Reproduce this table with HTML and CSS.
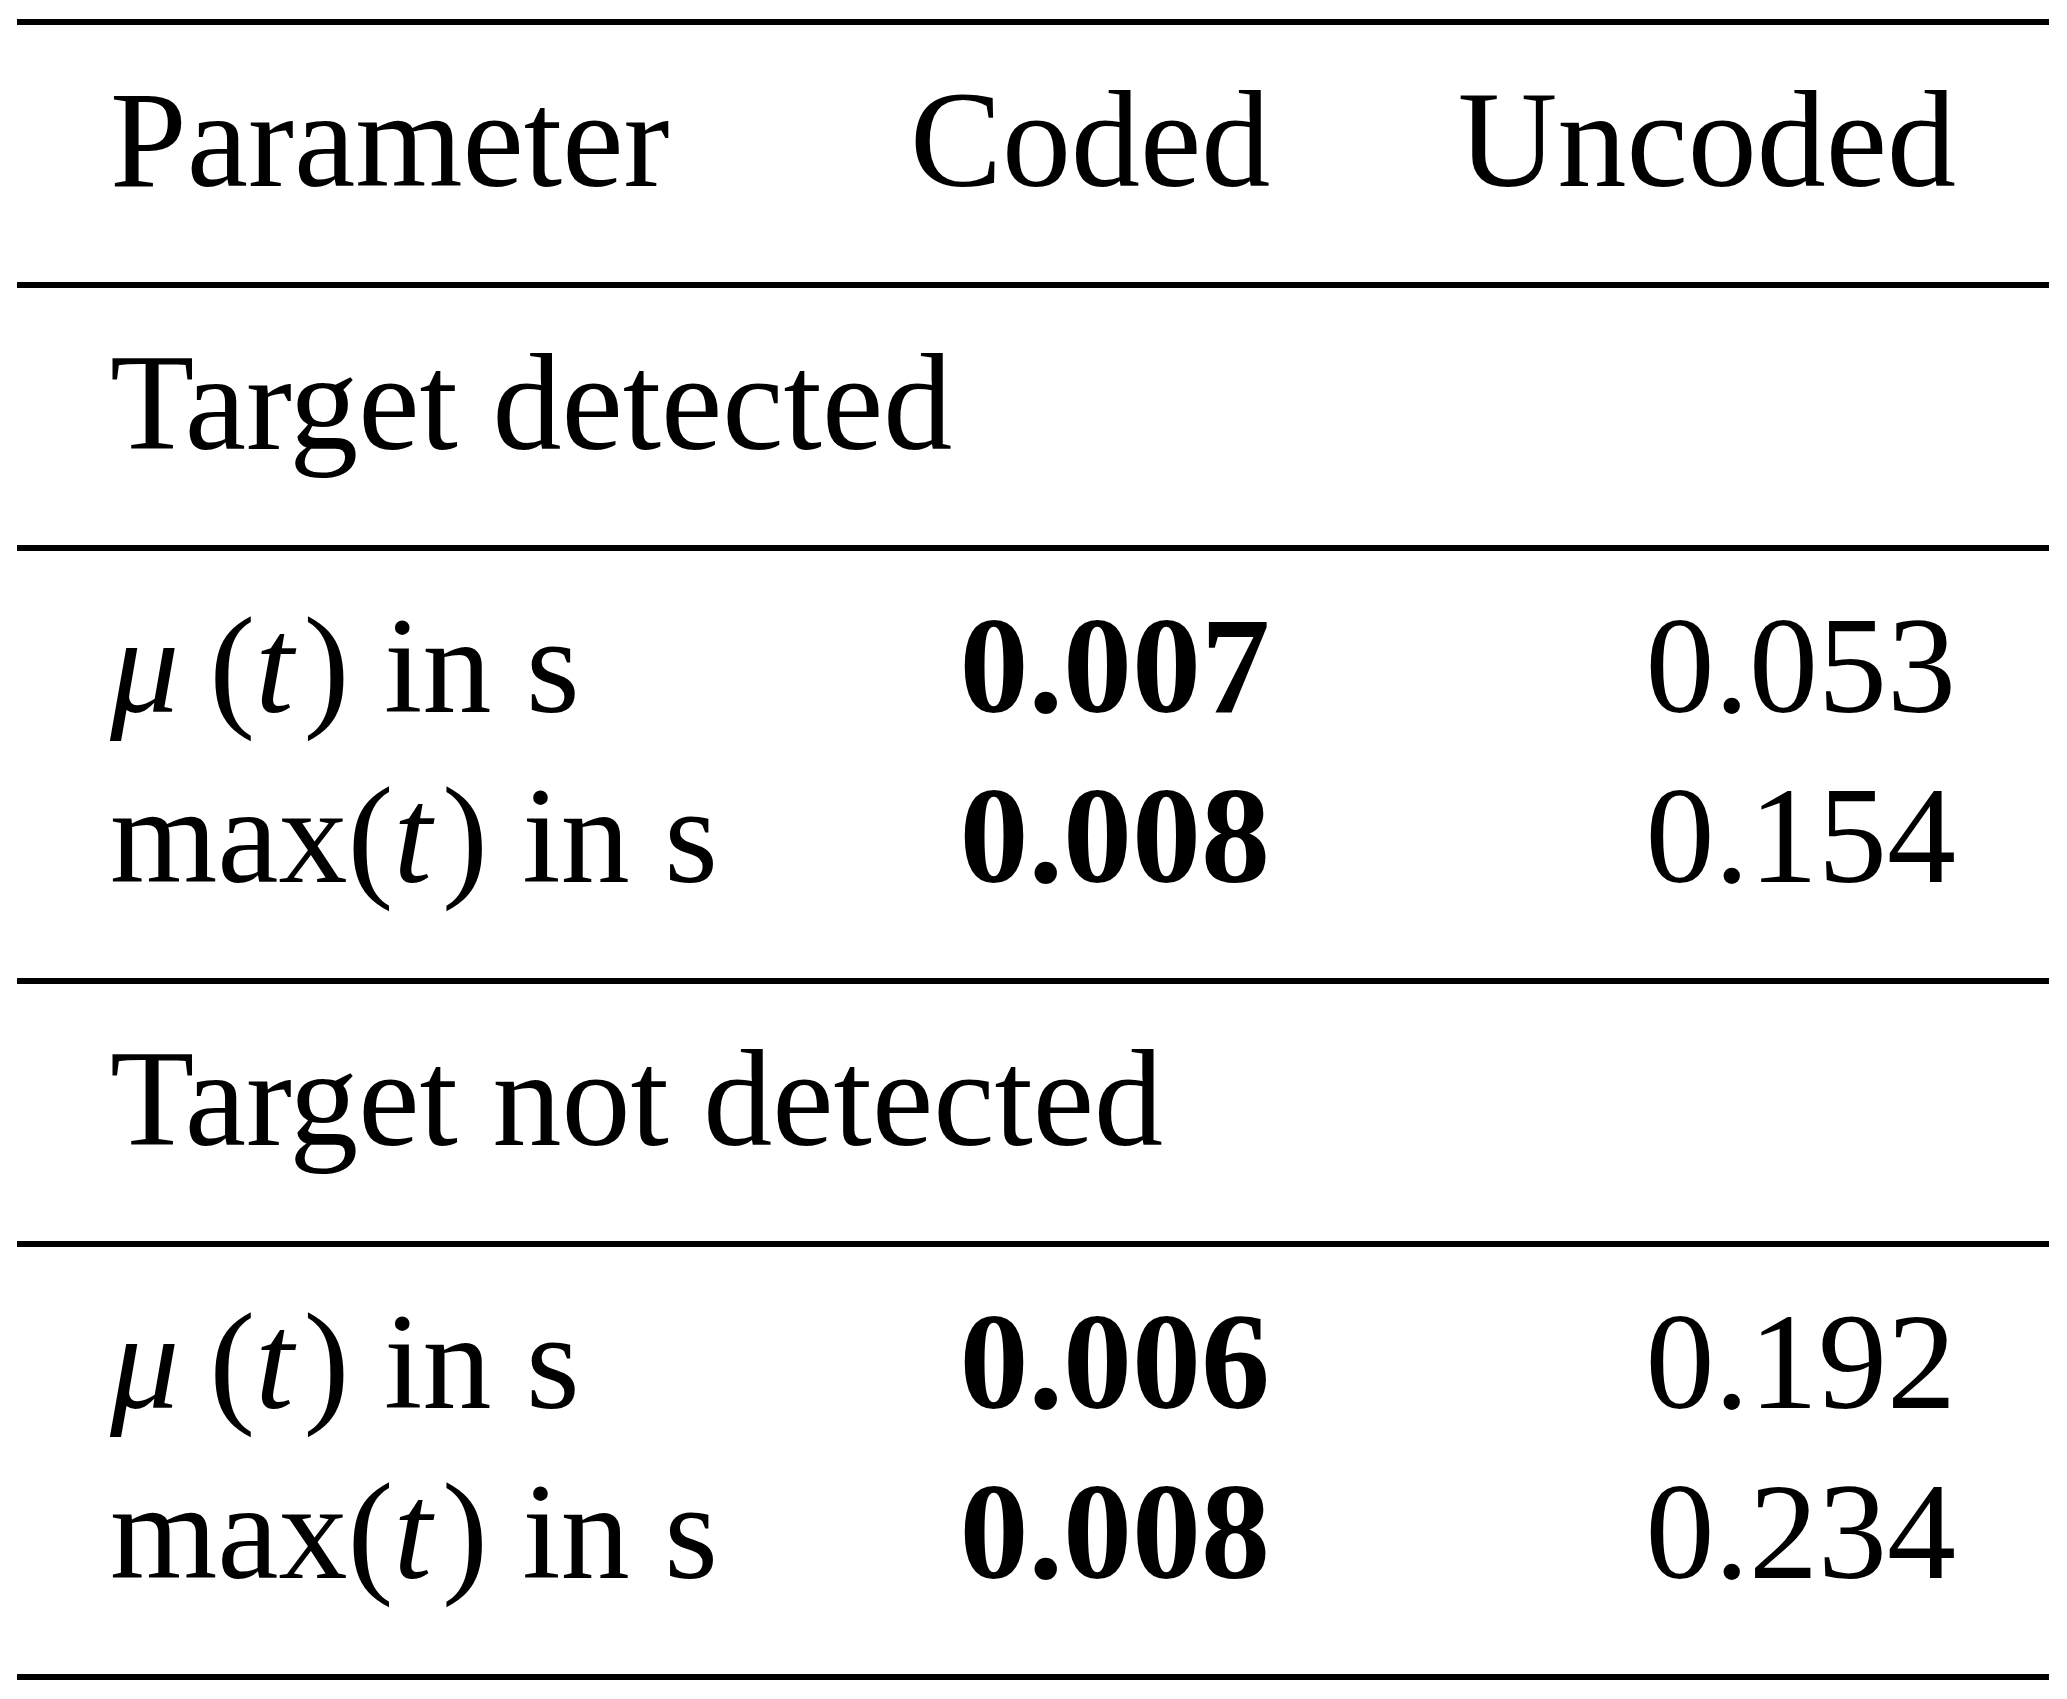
FILE: index.html
```html
<!DOCTYPE html>
<html>

<head>
	<meta http-equiv="Content-Type" content="text/html; charset=utf-8" />
	<title>Detection time</title>
	<link rel="stylesheet" href="styles.css">
</head>

<body>
	<div class="results">
		<div class="group">
			<span>Parameter</span>
			<span class="num">Coded</span>
			<span class="num">Uncoded</span>
		</div>
		<div class="group">
			<span class="span">Target detected</span>
		</div>
		<div class="group">
			<span><i class="mu">μ</i>(<i class="t">t</i>) in s</span>
			<b class="num">0.007</b>
			<span class="num">0.053</span>
			<span>max(<i class="t">t</i>) in s</span>
			<b class="num">0.008</b>
			<span class="num">0.154</span>
		</div>
		<div class="group">
			<span class="span">Target not detected</span>
		</div>
		<div class="group">
			<span><i class="mu">μ</i>(<i class="t">t</i>) in s</span>
			<b class="num">0.006</b>
			<span class="num">0.192</span>
			<span>max(<i class="t">t</i>) in s</span>
			<b class="num">0.008</b>
			<span class="num">0.234</span>
		</div>
	</div>
</body>

</html>
```

FILE: styles.css
```css
body {
	font-family: "Liberation Serif", "Times New Roman", serif;
	font-size: 138px;
	color: #000;
	background-color: #fff;
	margin: 19px 18px 0 17px;
}

.results {
	border-bottom: 6px solid #000;
}

.group {
	display: grid;
	grid-template-columns: 1fr 360px 500px;
	column-gap: 186px;
	padding: 30px 93px 57px;
	border-top: 6px solid #000;
	line-height: 170px;
	white-space: nowrap;
}

.group .num {
	text-align: right;
}

.group .span {
	grid-column: 1 / -1;
}

.group b {
	font-weight: bold;
}

.group i {
	font-style: italic;
}

.group .t {
	margin-right: 10px;
}

.group .mu {
	margin-right: 30px;
}
```
